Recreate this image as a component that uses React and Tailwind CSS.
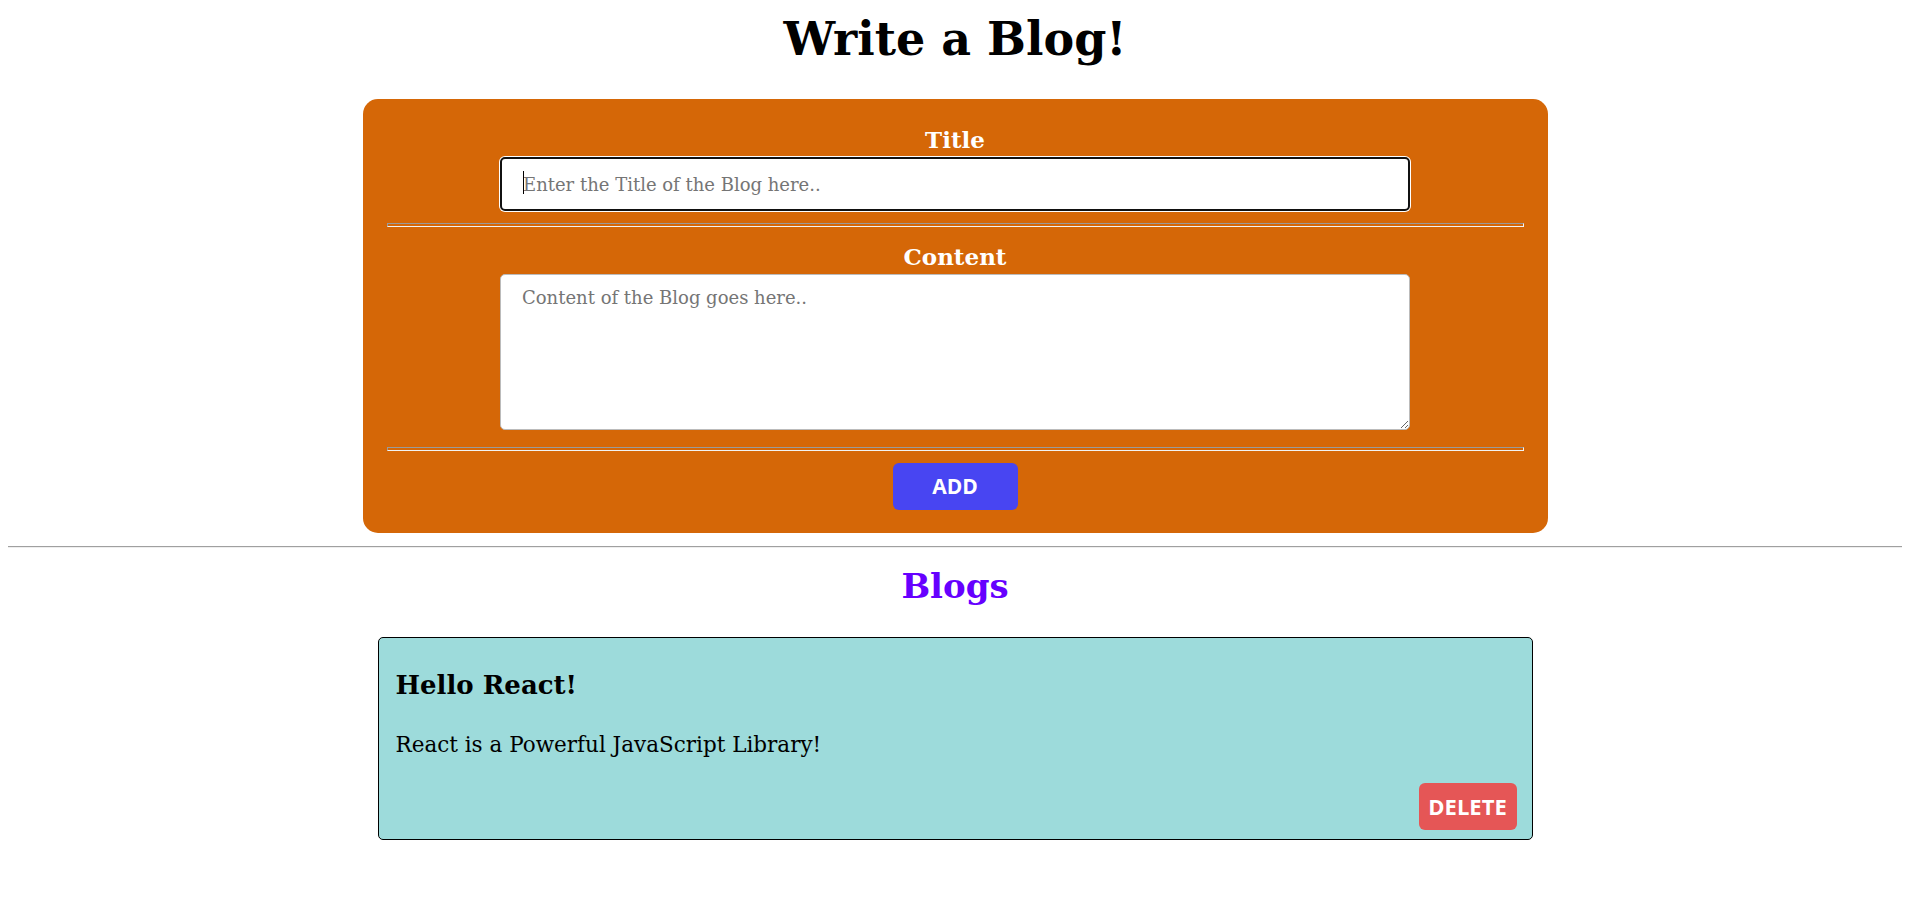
export default function App() {
  return (
    <div className="min-h-screen bg-white pl-2 pr-3 font-['DejaVu_Serif',serif] text-black">
      <h1 className="pt-[12px] text-center text-[46px] leading-[54px] font-bold">Write a Blog!</h1>

      <form className="mx-auto mt-[33px] w-[1185px] rounded-[15px] bg-[#d56707] px-[24px] pt-[27px] pb-[23px]">
        <div className="flex flex-col items-center">
          <label className="text-[23px] leading-[28px] font-bold text-white">Title</label>
          <div className="relative mt-[3px] w-[910px]">
            <input
              className="block h-[54px] w-full rounded-[5px] border-2 border-[#111111] bg-white pl-[21px] text-[18px] shadow-[0_0_0_1px_#ffffff] outline-none placeholder:text-[#757575]"
              placeholder="Enter the Title of the Blog here.."
            />
            <span className="absolute left-[23px] top-[14px] h-[23px] w-px bg-black" />
          </div>
        </div>

        <hr className="mt-[12px] h-[4px] border border-[#9a9a9a] border-b-[#f2f2f2] border-r-[#f2f2f2]" />

        <div className="mt-[16px] flex flex-col items-center">
          <label className="text-[23px] leading-[28px] font-bold text-white">Content</label>
          <textarea
            className="mt-[3px] h-[156px] w-[910px] rounded-[5px] border border-[#bbbbbb] bg-white px-[21px] py-[12px] text-[18px] leading-[21px] outline-none placeholder:text-[#757575]"
            placeholder="Content of the Blog goes here.."
          />
        </div>

        <hr className="mt-[17px] h-[4px] border border-[#9a9a9a] border-b-[#f2f2f2] border-r-[#f2f2f2]" />

        <div className="mt-[12px] flex justify-center">
          <button
            type="button"
            className="h-[47px] w-[125px] rounded-[6px] bg-[#4845f2] font-['Open_Sans',sans-serif] text-[21px] font-bold text-white"
          >
            ADD
          </button>
        </div>
      </form>

      <hr className="mt-[13px] border-t border-b border-t-[#a0a0a0] border-b-[#eeeeee]" />

      <h2 className="mt-[18px] text-center text-[34px] leading-[40px] font-bold text-[#6600ff]">Blogs</h2>

      <div className="mx-auto mt-[31px] w-[1155px] rounded-[5px] border border-black bg-[#9ddbdb] pl-[17px] pr-[15px] pt-[32px] pb-[9px]">
        <h3 className="text-[26px] leading-[30px] font-bold">Hello React!</h3>
        <p className="mt-[32px] text-[21.5px] leading-[26px]">React is a Powerful JavaScript Library!</p>
        <div className="mt-[25px] flex justify-end">
          <button
            type="button"
            className="h-[47px] w-[98px] rounded-[6px] bg-[#e55656] font-['Open_Sans',sans-serif] text-[22px] font-bold text-white"
          >
            DELETE
          </button>
        </div>
      </div>
    </div>
  );
}
